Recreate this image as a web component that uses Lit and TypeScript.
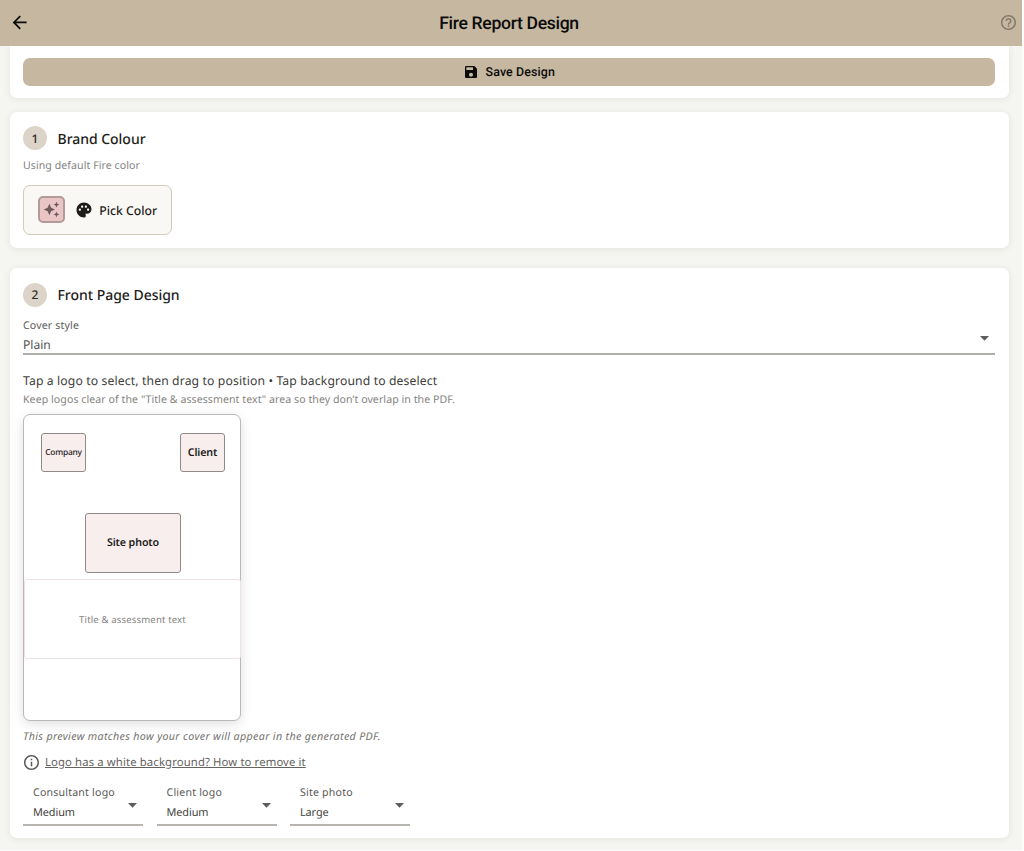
import { LitElement, html, css } from "lit";
import { customElement, property } from "lit/decorators.js";

const arrow = html`<svg width="9" height="5" viewBox="0 0 9 5"><path d="M0 0h9L4.5 4.7z" fill="#5f5d5a" /></svg>`;

@customElement("step-title")
class StepTitle extends LitElement {
  @property() num = "";
  @property() label = "";
  static styles = css`
    :host { display: flex; align-items: center; height: 24px; gap: 10.5px; }
    .num { width: 24px; height: 24px; border-radius: 50%; background: #dcd4c8; display: grid; place-items: center; font-size: 12px; font-weight: 500; color: #2a2927; }
    .label { padding-top: 1.6px; font-size: 14px; font-weight: 500; color: #1d1c1a; letter-spacing: -0.03px; }
  `;
  render() {
    return html`<span class="num">${this.num}</span><span class="label">${this.label}</span>`;
  }
}

@customElement("size-select")
class SizeSelect extends LitElement {
  @property() label = "";
  @property() value = "";
  static styles = css`
    :host { display: flex; box-sizing: border-box; width: 120px; height: 41px; padding: 0 6px 0 10px; justify-content: space-between; border-bottom: 2px solid #b8b5b1; }
    .texts { display: flex; flex-direction: column; }
    .label { font-size: 10.6px; line-height: 16px; letter-spacing: 0.2px; color: #5b5955; }
    .value { font-size: 10.9px; line-height: 16px; margin-top: 4px; letter-spacing: -0.1px; color: #454340; }
    svg { margin-top: 18px; }
  `;
  render() {
    return html`<div class="texts"><span class="label">${this.label}</span><span class="value">${this.value}</span></div>${arrow}`;
  }
}

@customElement("app-root")
class AppRoot extends LitElement {
  static styles = css`
    :host { display: block; width: 1024px; height: 851px; overflow: hidden; background: #fcfcfb; font-family: "Noto Sans", sans-serif; color: #1d1c1a; white-space: nowrap; text-rendering: geometricPrecision; }
    .page { width: 1022px; height: 850px; background: #f5f5f1; overflow: hidden; }
    header { display: flex; box-sizing: border-box; align-items: center; justify-content: space-between; height: 46px; padding: 0 6px 1px 12px; background: #c5b7a0; position: relative; z-index: 1; }
    h1 { margin: 2px 11px 0 0; font: 500 17.6px Roboto, sans-serif; color: #0c0b09; letter-spacing: -0.33px; }
    header svg, .save svg, .pick svg, .help svg { display: block; }
    main { padding: 0 13.5px 0 9.5px; }
    .card { box-sizing: border-box; background: #fff; border-radius: 7px; padding: 14px 14px 0 13.5px; box-shadow: 0 1px 7px rgba(60, 55, 40, 0.09); }
    .top { height: 52.4px; padding-top: 11.5px; border-radius: 0 0 7px 7px; margin-bottom: 14px; }
    .brand { height: 136px; margin-bottom: 20px; }
    .front { height: 570px; padding-top: 14.5px; }
    .save { display: flex; align-items: center; justify-content: center; gap: 7px; height: 28px; border-radius: 7px; background: #c5b7a0; font: 500 12.4px/16px Roboto, sans-serif; color: #0c0b09; letter-spacing: 0.12px; }
    .save span { padding-top: 2px; }
    .note { font-size: 10.6px; line-height: 16px; letter-spacing: 0.06px; color: #85837f; }
    .brand .note { margin-top: 7.5px; }
    .pick { box-sizing: border-box; width: 149px; height: 50px; margin-top: 11px; border: 1px solid #d2c9ba; border-radius: 7px; background: #faf8f5; display: flex; align-items: center; padding-left: 14px; font-size: 12.2px; font-weight: 500; }
    .swatch { box-sizing: border-box; width: 27px; height: 27px; border: 2px solid #b39a9a; border-radius: 5px; background: #e9c5c5; display: grid; place-items: center; margin-right: 10px; }
    .pick .word { margin-left: 6.3px; padding-top: 1px; }
    .field { box-sizing: border-box; height: 37.5px; margin-top: 11px; display: flex; justify-content: space-between; border-bottom: 2px solid #b0aeaa; padding-right: 6px; }
    .field .label { font-size: 10.6px; line-height: 16px; letter-spacing: 0.15px; color: #5b5955; }
    .field .value { font-size: 12.1px; line-height: 20px; margin-top: 1px; color: #55534f; }
    .field svg { margin-top: 18px; }
    .hint { margin-top: 17px; font-size: 12.2px; line-height: 18px; letter-spacing: 0.125px; color: #403e3b; }
    .front .note { margin-top: 2px; }
    .cover { position: relative; box-sizing: border-box; width: 218px; height: 307.5px; margin-top: 5.5px; border: 1px solid #bab9b7; border-radius: 7px; background: #fff; box-shadow: 0 3px 12px rgba(0, 0, 0, 0.13); }
    .block { position: absolute; box-sizing: border-box; display: grid; place-items: center; padding-top: 1px; border: 1px solid #8f8989; border-radius: 3px; background: #f9eeee; font-size: 10.7px; font-weight: 600; letter-spacing: -0.12px; }
    .company { left: 17px; top: 18px; width: 45px; height: 39px; font-size: 8.4px; font-weight: 500; letter-spacing: -0.2px; }
    .client { left: 156px; top: 18px; width: 45px; height: 39px; }
    .photo { left: 61px; top: 98px; width: 96px; height: 60px; }
    .title { left: 0; top: 164px; width: 217px; height: 80px; background: #fff; border-color: #eee2e2; font-size: 9.6px; font-weight: 400; color: #85837f; letter-spacing: 0.13px; }
    .caption { margin-top: 7.7px; font-size: 10.7px; line-height: 16px; font-style: italic; letter-spacing: 0.34px; color: #74726e; }
    .help { display: flex; align-items: center; gap: 6px; height: 18px; margin-top: 8.5px; padding-left: 1px; font-size: 11.3px; letter-spacing: 0.13px; color: #65635f; text-decoration: underline; }
    .sizes { display: flex; gap: 13.5px; margin-top: 13.3px; }
  `;

  render() {
    return html`<div class="page">
      <header>
        <svg width="16" height="16" viewBox="4 4 16 16"><path d="M20 11H7.83l5.59-5.59L12 4l-8 8 8 8 1.41-1.41L7.83 13H20z" transform="translate(1.2 1) scale(.87)" fill="#0c0b09" /></svg>
        <h1>Fire Report Design</h1>
        <svg width="15" height="15" viewBox="2 2 20 20" fill="#83796a"><path d="M11 18h2v-2h-2v2zm1-16C6.48 2 2 6.48 2 12s4.48 10 10 10 10-4.48 10-10S17.52 2 12 2zm0 18c-4.41 0-8-3.59-8-8s3.59-8 8-8 8 3.59 8 8-3.59 8-8 8zm0-14c-2.21 0-4 1.79-4 4h2c0-1.1.9-2 2-2s2 .9 2 2c0 2-3 1.75-3 5h2c0-2.25 3-2.5 3-5 0-2.21-1.79-4-4-4z" /></svg>
      </header>
      <main>
        <section class="card top">
          <div class="save">
            <svg width="16" height="16" viewBox="0 0 24 24"><path d="M17 3H5c-1.11 0-2 .9-2 2v14c0 1.1.89 2 2 2h14c1.1 0 2-.9 2-2V7l-4-4zm-5 16c-1.66 0-3-1.34-3-3s1.34-3 3-3 3 1.34 3 3-1.34 3-3 3zm3-10H5V5h10v4z" fill="#0c0b09" /></svg>
            <span>Save Design</span>
          </div>
        </section>
        <section class="card brand">
          <step-title num="1" label="Brand Colour"></step-title>
          <div class="note">Using default Fire color</div>
          <div class="pick">
            <span class="swatch"><svg width="17" height="17" viewBox="0 0 24 24" fill="#6f5b5b"><path d="M19 9l1.25-2.75L23 5l-2.75-1.25L19 1l-1.25 2.75L15 5l2.75 1.25zM19 15l-1.25 2.75L15 19l2.75 1.25L19 23l1.25-2.75L23 19l-2.75-1.25zM11.5 9.5L9 4 6.5 9.5 1 12l5.500 2.500L9 20l2.500-5.500L17 12z" /></svg></span>
            <svg width="18" height="18" viewBox="0 0 24 24"><path d="M12 2C6.490 2 2 6.490 2 12s4.490 10 10 10c1.380 0 2.500-1.120 2.500-2.500 0-.61-.23-1.200-.64-1.670-.08-.1-.13-.21-.13-.33 0-.28.22-.5.5-.5H16c3.310 0 6-2.690 6-6 0-4.960-4.490-9-10-9zm5.500 11c-.83 0-1.500-.67-1.500-1.500s.67-1.500 1.500-1.500 1.500.67 1.500 1.500-.67 1.500-1.500 1.500zm-3-4c-.83 0-1.500-.67-1.500-1.500S13.670 6 14.500 6s1.500.67 1.500 1.500S15.330 9 14.500 9zM5 11.500c0-.83.67-1.500 1.500-1.500s1.500.67 1.500 1.500S7.330 13 6.500 13 5 12.330 5 11.500zm6-4c0 .83-.67 1.500-1.500 1.500S8 8.330 8 7.500 8.670 6 9.500 6s1.500.67 1.500 1.500z" fill="#1d1c1a" /></svg>
            <span class="word">Pick Color</span>
          </div>
        </section>
        <section class="card front">
          <step-title num="2" label="Front Page Design"></step-title>
          <div class="field">
            <div><div class="label">Cover style</div><div class="value">Plain</div></div>
            ${arrow}
          </div>
          <div class="hint">Tap a logo to select, then drag to position • Tap background to deselect</div>
          <div class="note">Keep logos clear of the "Title &amp; assessment text" area so they don’t overlap in the PDF.</div>
          <div class="cover">
            <div class="block title">Title &amp; assessment text</div>
            <div class="block company">Company</div>
            <div class="block client">Client</div>
            <div class="block photo">Site photo</div>
          </div>
          <div class="caption">This preview matches how your cover will appear in the generated PDF.</div>
          <div class="help">
            <svg width="15" height="15" viewBox="2 2 20 20" fill="#5b5955"><path d="M11 7h2v2h-2zm0 4h2v6h-2zm1-9C6.480 2 2 6.480 2 12s4.480 10 10 10 10-4.480 10-10S17.520 2 12 2zm0 18c-4.410 0-8-3.590-8-8s3.590-8 8-8 8 3.590 8 8-3.590 8-8 8z" /></svg>
            <span>Logo has a white background? How to remove it</span>
          </div>
          <div class="sizes">
            <size-select label="Consultant logo" value="Medium"></size-select>
            <size-select label="Client logo" value="Medium"></size-select>
            <size-select label="Site photo" value="Large"></size-select>
          </div>
        </section>
      </main>
    </div>`;
  }
}
